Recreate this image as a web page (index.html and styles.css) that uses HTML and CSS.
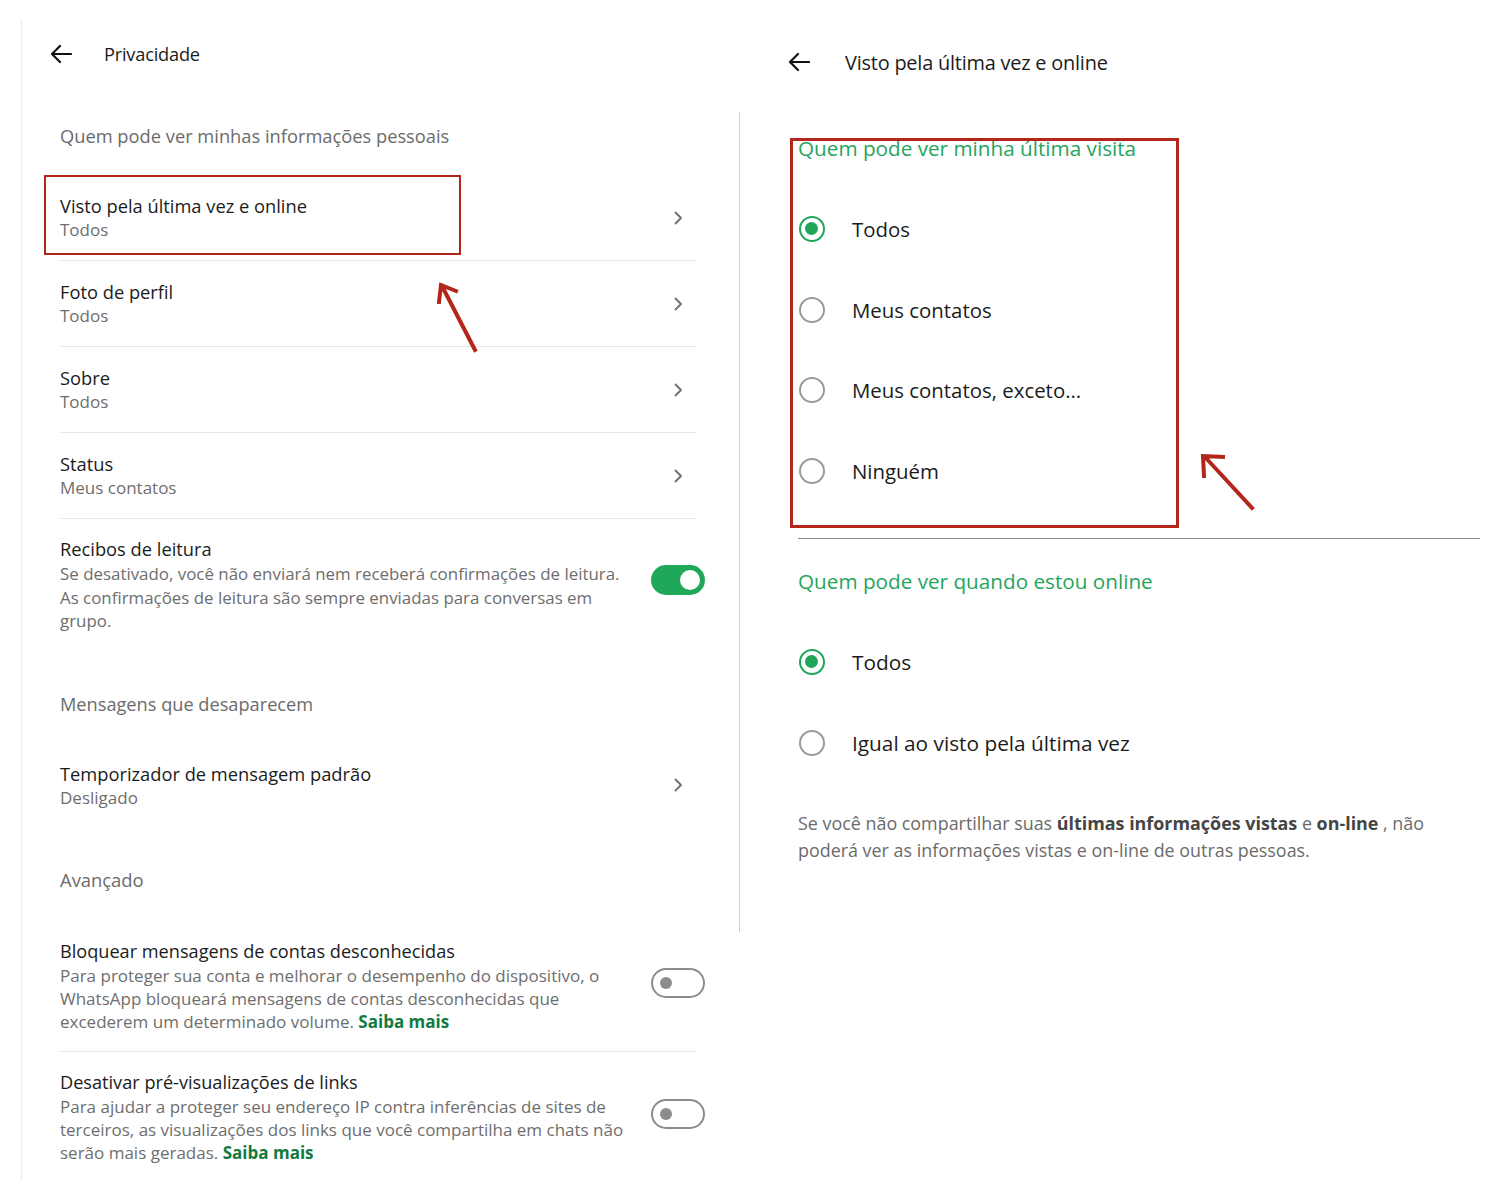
FILE: index.html
```html
<!DOCTYPE html>
<html lang="pt-BR">
<head>
<meta charset="utf-8">
<title>Privacidade</title>
<link rel="stylesheet" href="styles.css">
</head>
<body>
<div class="page">
  <section class="left">
    <header class="hdr">
      <svg class="back" width="22" height="20" viewBox="0 0 22 20"><path d="M21 10H2M10 2L2 10l8 8" fill="none" stroke="#111" stroke-width="2.2" stroke-linecap="round" stroke-linejoin="round"/></svg>
      <h1 class="hdr-title">Privacidade</h1>
    </header>

    <div class="sec-title first">Quem pode ver minhas informações pessoais</div>

    <div class="row nav">
      <div class="txt"><div class="t">Visto pela última vez e online</div><div class="s">Todos</div></div>
      <svg class="chev" width="10" height="16" viewBox="0 0 10 16"><path d="M2.5 2.5l5.5 5.5-5.5 5.5" fill="none" stroke="#707070" stroke-width="1.9" stroke-linecap="round" stroke-linejoin="round"/></svg>
    </div>
    <div class="row nav">
      <div class="txt"><div class="t">Foto de perfil</div><div class="s">Todos</div></div>
      <svg class="chev" width="10" height="16" viewBox="0 0 10 16"><path d="M2.5 2.5l5.5 5.5-5.5 5.5" fill="none" stroke="#707070" stroke-width="1.9" stroke-linecap="round" stroke-linejoin="round"/></svg>
    </div>
    <div class="row nav">
      <div class="txt"><div class="t">Sobre</div><div class="s">Todos</div></div>
      <svg class="chev" width="10" height="16" viewBox="0 0 10 16"><path d="M2.5 2.5l5.5 5.5-5.5 5.5" fill="none" stroke="#707070" stroke-width="1.9" stroke-linecap="round" stroke-linejoin="round"/></svg>
    </div>
    <div class="row nav">
      <div class="txt"><div class="t">Status</div><div class="s">Meus contatos</div></div>
      <svg class="chev" width="10" height="16" viewBox="0 0 10 16"><path d="M2.5 2.5l5.5 5.5-5.5 5.5" fill="none" stroke="#707070" stroke-width="1.9" stroke-linecap="round" stroke-linejoin="round"/></svg>
    </div>

    <div class="row tog recibos">
      <div class="txt">
        <div class="t">Recibos de leitura</div>
        <div class="d">Se desativado, você não enviará nem receberá confirmações de leitura.<br>As confirmações de leitura são sempre enviadas para conversas em<br>grupo.</div>
      </div>
      <span class="switch on"><span class="knob"></span></span>
    </div>

    <div class="sec-title mid">Mensagens que desaparecem</div>

    <div class="row nav plain">
      <div class="txt"><div class="t">Temporizador de mensagem padrão</div><div class="s">Desligado</div></div>
      <svg class="chev" width="10" height="16" viewBox="0 0 10 16"><path d="M2.5 2.5l5.5 5.5-5.5 5.5" fill="none" stroke="#707070" stroke-width="1.9" stroke-linecap="round" stroke-linejoin="round"/></svg>
    </div>

    <div class="sec-title adv">Avançado</div>

    <div class="row tog cond divided">
      <div class="txt">
        <div class="t">Bloquear mensagens de contas desconhecidas</div>
        <div class="d">Para proteger sua conta e melhorar o desempenho do dispositivo, o<br>WhatsApp bloqueará mensagens de contas desconhecidas que<br>excederem um determinado volume. <a class="more">Saiba mais</a></div>
      </div>
      <span class="switch off"><span class="knob"></span></span>
    </div>
    <div class="row tog cond">
      <div class="txt">
        <div class="t">Desativar pré-visualizações de links</div>
        <div class="d">Para ajudar a proteger seu endereço IP contra inferências de sites de<br>terceiros, as visualizações dos links que você compartilha em chats não<br>serão mais geradas. <a class="more">Saiba mais</a></div>
      </div>
      <span class="switch off"><span class="knob"></span></span>
    </div>
  </section>

  <div class="vsep"></div>

  <section class="right">
    <header class="hdr hdr-r">
      <svg class="back" width="22" height="20" viewBox="0 0 22 20"><path d="M21 10H2M10 2L2 10l8 8" fill="none" stroke="#111" stroke-width="2.2" stroke-linecap="round" stroke-linejoin="round"/></svg>
      <h1 class="hdr-title r">Visto pela última vez e online</h1>
    </header>

    <div class="group-title g1">Quem pode ver minha última visita</div>
    <ul class="radios">
      <li class="radio"><span class="dot checked"></span><span class="lbl">Todos</span></li>
      <li class="radio"><span class="dot"></span><span class="lbl">Meus contatos</span></li>
      <li class="radio"><span class="dot"></span><span class="lbl">Meus contatos, exceto...</span></li>
      <li class="radio"><span class="dot"></span><span class="lbl">Ninguém</span></li>
    </ul>
    <hr class="hline">
    <div class="group-title g2">Quem pode ver quando estou online</div>
    <ul class="radios r2">
      <li class="radio"><span class="dot checked"></span><span class="lbl">Todos</span></li>
      <li class="radio"><span class="dot"></span><span class="lbl">Igual ao visto pela última vez</span></li>
    </ul>
    <p class="note">Se você não compartilhar suas <b>últimas informações vistas</b> e <b>on-line</b> , não<br>poderá ver as informações vistas e on-line de outras pessoas.</p>
  </section>

  <div class="mark box-left"></div>
  <div class="mark box-right"></div>
  <svg class="mark arrow-left" width="60" height="90" viewBox="0 0 60 90"><path d="M48 82L15 18M12 34L14 17 29 23" fill="none" stroke="#b3261c" stroke-width="4" stroke-linecap="square"/></svg>
  <svg class="mark arrow-right" width="70" height="70" viewBox="0 0 70 70"><path d="M62 62L15 11M14 30L13 10 33 11" fill="none" stroke="#b3261c" stroke-width="4" stroke-linecap="square"/></svg>
</div>
</body>
</html>
```

FILE: styles.css
```css
* { box-sizing: border-box; }
html, body { margin: 0; padding: 0; background: #fff; }
body {
  font-family: "Open Sans", "Noto Sans", "Liberation Sans", sans-serif;
  color: #1b1b1b;
}
.page {
  position: relative;
  width: 1500px;
  height: 1200px;
  display: flex;
  align-items: flex-start;
}

/* ---------- left column ---------- */
.left {
  margin-left: 21px;
  margin-top: 20px;
  width: 718px;
  height: 1160px;
  border-left: 1px solid #ececec;
  padding-left: 38px;
  padding-right: 42px;
}
.hdr {
  display: flex;
  align-items: center;
  height: 68px;
  margin-left: -10px;
  gap: 32px;
}
.hdr-title {
  margin: 0;
  font-size: 18.2px;
  font-weight: 400;
  color: #1b1b1b;
  letter-spacing: -0.2px;
}
.sec-title {
  font-size: 18.2px;
  line-height: 24px;
  color: #6b6b6b;
  padding-bottom: 27px;
  margin-top: 40px;
}
.sec-title.first { margin-top: 36px; font-size: 18.3px; }
.sec-title.mid { margin-top: 41px; }
.sec-title.adv { padding-bottom: 28px; font-size: 18.4px; }

.row {
  display: flex;
  align-items: center;
  justify-content: space-between;
}
.row.nav {
  padding: 18px 0;
  border-bottom: 1px solid #e8e8e8;
}
.row.nav.plain { border-bottom: none; }
.t {
  font-size: 18.3px;
  line-height: 25px;
  color: #1b1b1b;
}
.s {
  font-size: 17px;
  line-height: 24px;
  color: #6e6e6e;
}
.chev { margin-right: 14px; flex: none; }

.row.tog {
  padding: 18px 0 18px;
}
.row.tog.recibos { padding-top: 16px; }
.recibos .t { line-height: 27px; }
.row.tog.divided {
  border-bottom: 1px solid #e8e8e8;
  padding-top: 19px;
}
.d {
  font-size: 16.9px;
  line-height: 23.5px;
  color: #6e6e6e;
}
.cond .d { line-height: 23px; font-size: 17px; }
.cond .t { font-size: 18.15px; }
.more {
  color: #137a3f;
  font-weight: 700;
}
.switch {
  flex: none;
  position: relative;
  width: 54px;
  height: 30px;
  border-radius: 15px;
  margin-right: -8px;
}
.switch.on { background: #20a85a; margin-bottom: 7px; }
.switch.on .knob {
  position: absolute;
  right: 5px;
  top: 5px;
  width: 20px;
  height: 20px;
  border-radius: 50%;
  background: #fff;
}
.switch.off {
  background: #fff;
  border: 2px solid #8c8c8c;
  margin-bottom: 5px;
}
.switch.off .knob {
  position: absolute;
  left: 7px;
  top: 7px;
  width: 12px;
  height: 12px;
  border-radius: 50%;
  background: #8c8c8c;
}

/* ---------- separator ---------- */
.vsep {
  width: 1px;
  height: 820px;
  margin-top: 112px;
  background: #d0d0d0;
  flex: none;
}

/* ---------- right column ---------- */
.right {
  width: 760px;
  padding-left: 58px;
  padding-right: 20px;
}
.hdr-r {
  margin-top: 20px;
  height: 84px;
  gap: 35px;
}
.hdr-title.r { font-size: 19.9px; }
.group-title {
  font-size: 20.7px;
  line-height: 28px;
  color: #25a55c;
}
.group-title.g1 { margin-top: 30px; }
.radios {
  list-style: none;
  margin: 27px 0 27px;
  padding: 0;
}
.radio {
  display: flex;
  align-items: center;
  height: 80.5px;
  gap: 27px;
}
.dot {
  flex: none;
  width: 26px;
  height: 26px;
  border-radius: 50%;
  border: 2px solid #9a9a9a;
  margin-left: 1px;
  position: relative;
}
.dot.checked { border: 2.5px solid #21a55a; }
.dot.checked::after {
  content: "";
  position: absolute;
  left: 4px;
  top: 4px;
  width: 13px;
  height: 13px;
  border-radius: 50%;
  background: #21a55a;
}
.lbl {
  font-size: 20.4px;
  color: #1b1b1b;
}
.r2 .lbl { font-size: 20.8px; }
.hline {
  margin: 0;
  border: none;
  height: 1px;
  background: #8c8c8c;
}
.group-title.g2 { margin-top: 28px; }
.note {
  margin: 0;
  font-size: 17.9px;
  line-height: 27px;
  color: #6b6b6b;
}
.note b { color: #454545; font-weight: 700; }

/* ---------- annotations ---------- */
.mark { position: absolute; pointer-events: none; }
.box-left {
  left: 44px;
  top: 175px;
  width: 417px;
  height: 80px;
  border: 2.5px solid #b3261c;
}
.box-right {
  left: 790px;
  top: 138px;
  width: 389px;
  height: 390px;
  border: 3px solid #b3261c;
}
.arrow-left { left: 427px; top: 268px; }
.arrow-right { left: 1190px; top: 446px; }
```
